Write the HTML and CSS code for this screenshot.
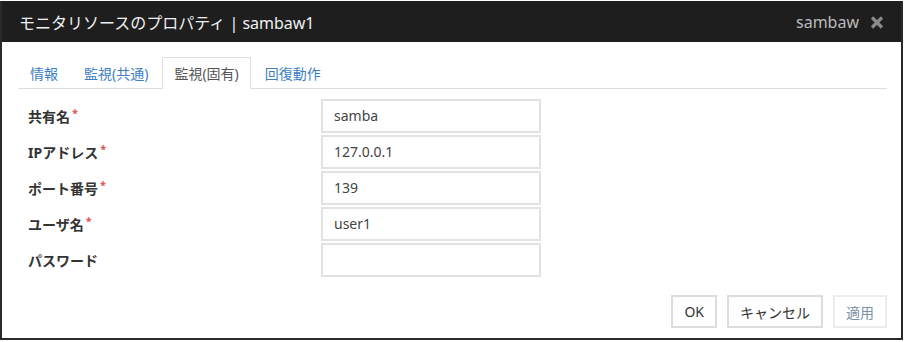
FILE: index.html
```html
<!DOCTYPE html>
<html lang="ja">
<head>
<meta charset="UTF-8">
<title>モニタリソースのプロパティ</title>
<link rel="stylesheet" href="styles.css">
</head>
<body>
<div class="dialog">
  <div class="header">
    <span class="title">モニタリソースのプロパティ | sambaw1</span>
    <span class="header-right">sambaw
      <svg class="close" width="14" height="13" viewBox="0 0 14 13">
        <path d="M2 1.5 L12 11.5 M12 1.5 L2 11.5" stroke="#8a8a8a" stroke-width="3.2" fill="none"/>
      </svg>
    </span>
  </div>
  <div class="content">
    <ul class="tabs">
      <li>情報</li>
      <li>監視(共通)</li>
      <li class="active">監視(固有)</li>
      <li>回復動作</li>
    </ul>
    <div class="form">
      <label>共有名<span class="req">*</span></label>
      <div class="field">samba</div>
      <label>IPアドレス<span class="req">*</span></label>
      <div class="field">127.0.0.1</div>
      <label>ポート番号<span class="req">*</span></label>
      <div class="field">139</div>
      <label>ユーザ名<span class="req">*</span></label>
      <div class="field">user1</div>
      <label>パスワード</label>
      <div class="field"></div>
    </div>
    <div class="buttons">
      <button class="btn">OK</button>
      <button class="btn">キャンセル</button>
      <button class="btn disabled">適用</button>
    </div>
  </div>
</div>
</body>
</html>
```

FILE: styles.css
```css
body {
  margin: 0;
  background-color: #fff;
  font-family: "Noto Sans", "Noto Sans CJK JP", sans-serif;
  color: #333;
}

.dialog {
  width: 903px;
  height: 339px;
  box-sizing: border-box;
  margin-top: 1px;
  border: 2px solid #2a2a2a;
  border-top: none;
  display: flex;
  flex-direction: column;
}

.header {
  height: 41px;
  background-color: #1e1e1e;
  display: flex;
  align-items: center;
  justify-content: space-between;
  padding: 0 17px 0 17px;
}

.title {
  color: #f0f0f0;
  font-size: 16px;
}

.header-right {
  color: #bbb;
  font-size: 16px;
  display: flex;
  align-items: center;
}

.close {
  margin-left: 11px;
  margin-top: 1px;
}

.content {
  padding: 15px 14px 0 16px;
}

.tabs {
  list-style: none;
  margin: 0;
  padding: 0;
  display: flex;
  border-bottom: 1px solid #ddd;
  height: 31px;
}

.tabs li {
  padding: 0 11px;
  margin-right: 2px;
  font-size: 14px;
  line-height: 31px;
  color: #3d7fc4;
  border: 1px solid transparent;
  border-bottom: none;
}

.tabs li.active {
  color: #555;
  background-color: #fff;
  border-color: #ddd;
  border-radius: 2px 2px 0 0;
  height: 31px;
}

.form {
  display: grid;
  grid-template-columns: 303px 220px;
  grid-auto-rows: 34px;
  row-gap: 2px;
  margin-top: 10px;
}

.form label {
  font-size: 14px;
  font-weight: bold;
  padding-left: 10px;
  display: flex;
  align-items: center;
}

.req {
  color: #d9534f;
  font-size: 11px;
  align-self: flex-start;
  margin-top: 6px;
  margin-left: 2px;
}

.field {
  border: 2px solid #e2e2e2;
  padding: 0 11px;
  font-size: 14px;
  line-height: 30px;
  color: #444;
}

.buttons {
  display: flex;
  justify-content: flex-end;
  gap: 10px;
  margin-top: 18px;
}

.btn {
  height: 33px;
  padding: 0 11px;
  font-family: inherit;
  font-size: 14px;
  color: #333;
  background-color: #fff;
  border: 2px solid #ddd;
}

.btn.disabled {
  color: #7a8fa8;
  border-color: #ececec;
}
```
